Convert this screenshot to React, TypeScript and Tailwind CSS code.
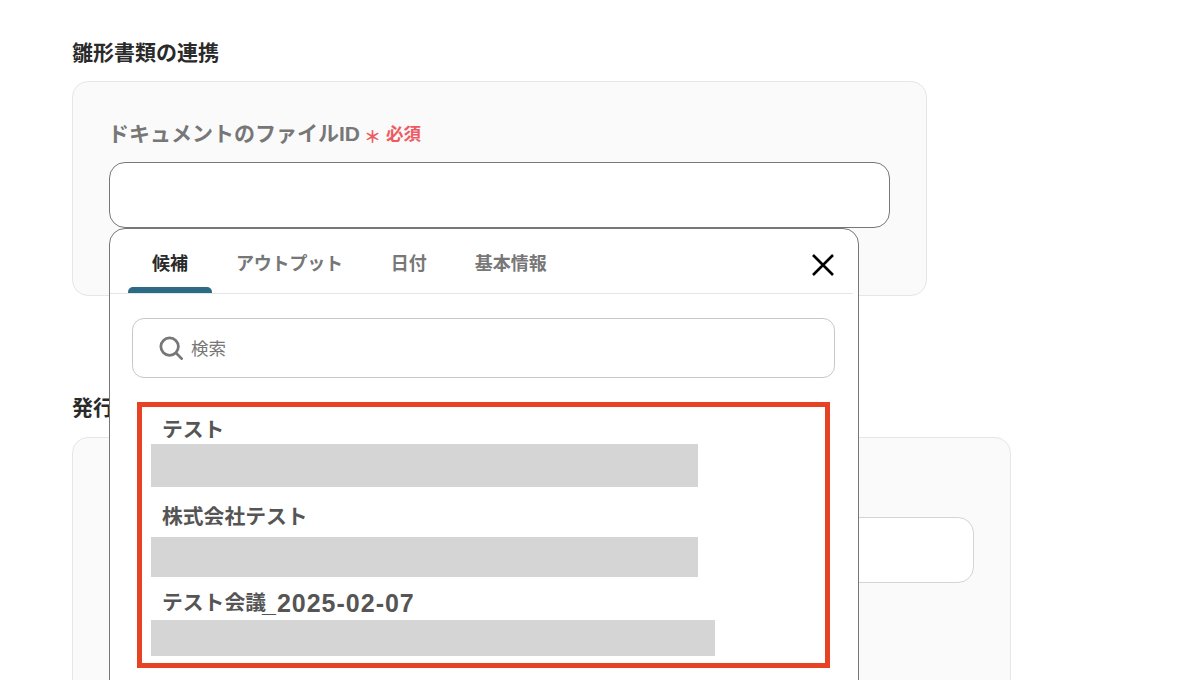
import React from "react";

const font = { fontFamily: '"Liberation Sans", "Noto Sans CJK JP", sans-serif' };

function Row({ children, mt, mb, bar, w, pt }: { children: React.ReactNode; mt: string; mb: string; bar: string; w: string; pt: string }) {
  return (
    <div>
      <div className={`${mt} ${mb} ${pt} h-[30px] pl-[11px] flex items-center text-[20.8px] font-bold leading-none text-[#555555] whitespace-nowrap`}>{children}</div>
      <div className={`${bar} ${w} bg-[#d5d5d5]`} />
    </div>
  );
}

export default function App() {
  const tabs = ["候補", "アウトプット", "日付", "基本情報"];
  return (
    <div style={font} className="h-[680px] w-[1200px] overflow-hidden bg-white pl-[72px] pt-[39px]">
      <h2 className="h-[28px] text-[21px] font-bold leading-[28px] text-[#2a2a2a]">雛形書類の連携</h2>
      <div className="relative z-10 mt-[14px] h-[215px] w-[855px] rounded-[16px] border border-[#e6e6e6] bg-[#fafafa] px-[36px] pt-[35px]">
        <div className="flex h-[32px] items-center whitespace-nowrap">
          <span className="ml-[-1px] text-[21px] font-bold leading-none text-[#777777]">ドキュメントのファイルID</span>
          <span className="ml-[4px] mt-[8px] text-[17px] font-bold leading-none text-[#ee5a62]">＊</span>
          <span className="ml-[5px] mt-[4px] text-[17.5px] font-bold leading-none text-[#ee5a62]">必須</span>
        </div>
        <div className="mt-[13px] h-[66px] w-[781px] rounded-[16px] border border-[#777777] bg-white" />
        <div className="absolute left-[36px] top-[146px] h-[500px] w-[750px] rounded-[16px] border border-[#777777] bg-white">
          <div className="relative mr-[5px] flex h-[65px] border-b border-[#e4e4e4] pl-[18px]">
            {tabs.map((t, i) => (
              <div key={t} className={`relative flex h-[64px] items-center px-[24px] pt-[6px] text-[18px] font-bold leading-none ${i === 0 ? "text-[#2a2a2a]" : "text-[#777777]"} ${i === 1 ? "tracking-[-0.2px]" : ""}`}>
                {t}
                {i === 0 && <span className="absolute bottom-0 left-0 h-[6px] w-full rounded-t-[5px] bg-[#2d6a85]" />}
              </div>
            ))}
            <svg className="absolute left-[701px] top-[24px]" width="24" height="24" viewBox="0 0 24 24" fill="none" stroke="#000000" strokeWidth="2.6">
              <path d="M2 2 L22 22 M22 2 L2 22" />
            </svg>
          </div>
          <div className="ml-[22px] mt-[24px] flex h-[60px] w-[703px] items-center rounded-[12px] border border-[#c8c8c8] pl-[26px]">
            <svg width="24" height="24" viewBox="0 0 26 26" fill="none" stroke="#777777" strokeWidth="3">
              <circle cx="11.5" cy="11.5" r="9.5" />
              <path d="M18.5 18.5 L24.5 24.5" strokeLinecap="round" />
            </svg>
            <span className="ml-[8px] mt-[4px] text-[17.5px] leading-none text-[#777777]">検索</span>
          </div>
          <div className="ml-[27px] mt-[24px] h-[266px] w-[693px] border-[5px] border-[#e84225] pl-[9px] pt-[2px]">
            <Row pt="pt-[2px]" mt="mt-[5px]" mb="mb-0" bar="h-[43px]" w="w-[547px]">テスト</Row>
            <Row pt="pt-[2px]" mt="mt-[14px]" mb="mb-[6px]" bar="h-[40px]" w="w-[547px]">株式会社テスト</Row>
            <Row pt="pt-0" mt="mt-[11px]" mb="mb-[2px]" bar="h-[36px]" w="w-[564px]">
              テスト会議<span className="ml-[-4px] text-[25px] tracking-[1px]">_2025-02-07</span>
            </Row>
          </div>
        </div>
      </div>
      <h2 className="mt-[98px] h-[28px] text-[21px] font-bold leading-[28px] text-[#2a2a2a]">発行書類の設定</h2>
      <div className="mt-[15px] h-[400px] w-[939px] rounded-[16px] border border-[#e6e6e6] bg-[#fafafa] px-[36px] pt-[79px]">
        <div className="h-[66px] w-[865px] rounded-[16px] border border-[#d0d5dc] bg-white" />
      </div>
    </div>
  );
}
